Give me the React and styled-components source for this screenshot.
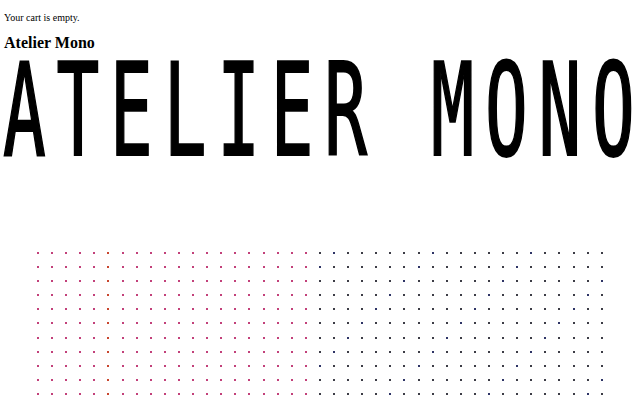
import styled, { createGlobalStyle } from "styled-components";

const GlobalStyle = createGlobalStyle`
  html, body {
    margin: 0;
    padding: 0;
    background: #ffffff;
  }
  body {
    font-family: "Liberation Serif", "Times New Roman", serif;
    color: #000;
  }
`;

const Page = styled.div`
  width: 640px;
  height: 400px;
  overflow: hidden;
  padding: 0 4px;
  box-sizing: border-box;
`;

const CartNote = styled.p`
  margin: 0;
  padding-top: 12px;
  font-size: 10px;
  line-height: 12px;
`;

const Brand = styled.h2`
  margin: 10px 0 0;
  font-size: 16px;
  line-height: 18px;
  font-weight: bold;
`;

const Wordmark = styled.div`
  height: 105px;
  margin-left: -1px;
  font-family: "DejaVu Sans Mono", monospace;
  font-size: 71px;
  line-height: 65px;
  letter-spacing: 10.8px;
  white-space: pre;
  -webkit-text-stroke: 1.2px #000;
  transform: scaleY(1.81);
  transform-origin: 0 0;
`;

const DotField = styled.div`
  margin: 95px 0 0 33px;
  display: grid;
  grid-template-columns: repeat(41, 2px);
  column-gap: 12.1px;
  row-gap: 12.1px;
`;

const Dot = styled.span`
  width: 2px;
  height: 2px;
  background: ${(p) => p.$tone};
`;

const COLS = 41;
const ROWS = 12;

const toneFor = (col, row) => {
  if (col < 20) {
    if (col === 5) return "#c8462e";
    return "#c2407a";
  }
  if ((col + row) % 7 === 0) return "#2e3466";
  return "#3c3c46";
};

const dots = [];
for (let r = 0; r < ROWS; r++) {
  for (let c = 0; c < COLS; c++) {
    dots.push({ id: `${r}-${c}`, tone: toneFor(c, r) });
  }
}

export default function App() {
  return (
    <Page>
      <GlobalStyle />
      <CartNote>Your cart is empty.</CartNote>
      <Brand>Atelier Mono</Brand>
      <Wordmark>ATELIER MONO</Wordmark>
      <DotField>
        {dots.map((d) => (
          <Dot key={d.id} $tone={d.tone} />
        ))}
      </DotField>
    </Page>
  );
}
